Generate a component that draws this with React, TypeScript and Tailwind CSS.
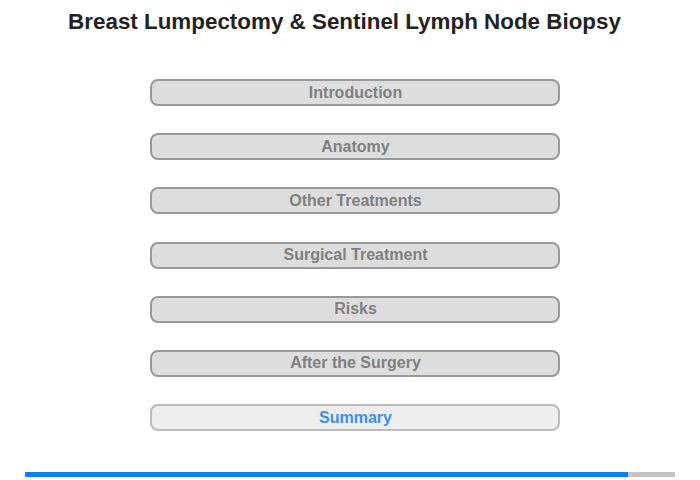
import React from "react";

const items = [
  "Introduction",
  "Anatomy",
  "Other Treatments",
  "Surgical Treatment",
  "Risks",
  "After the Surgery",
];

export default function App() {
  return (
    <div
      className="w-[700px] h-[480px] bg-white flex flex-col"
      style={{ fontFamily: '"Liberation Sans", Arial, sans-serif' }}
    >
      <div className="h-[46px] pt-[9px] pr-[11px] text-center text-[22.4px] font-bold text-[#222222] leading-[26px] whitespace-nowrap">
        Breast Lumpectomy &amp; Sentinel Lymph Node Biopsy
      </div>
      <div className="mt-[33px] flex flex-col items-center gap-[27.2px]">
        {items.map((t) => (
          <div
            key={t}
            className="w-[410px] h-[27px] ml-[9px] pl-[2px] rounded-[8px] border-2 border-[#999999] bg-[#dddddd] flex items-center justify-center text-[16px] font-bold text-[#808080]"
          >
            {t}
          </div>
        ))}
        <div className="w-[410px] h-[27px] ml-[9px] pl-[2px] rounded-[8px] border-2 border-[#bbbbbb] bg-[#eeeeee] flex items-center justify-center text-[16px] font-bold text-[#3b8ef0]">
          Summary
        </div>
      </div>
      <div className="mt-[41px] mx-[25px] h-[5px] flex">
        <div className="w-[603px] bg-[#0a7ffa]" />
        <div className="flex-1 bg-[#c4c4c4]" />
      </div>
    </div>
  );
}
